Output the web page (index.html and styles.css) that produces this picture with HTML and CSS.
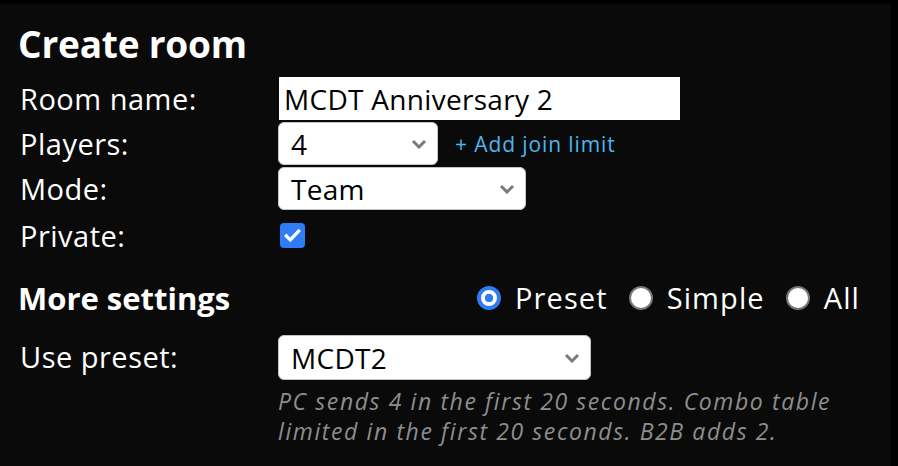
FILE: index.html
```html
<!DOCTYPE html>
<html lang="en">
<head>
  <meta charset="UTF-8">
  <title>Create room</title>
  <link rel="stylesheet" href="styles.css">
</head>
<body>
  <div class="panel">
    <h1 class="panel-title">Create room</h1>
    <div class="form-grid">
      <label class="form-label">Room name:</label>
      <div class="form-field">
        <input class="text-input" type="text" value="MCDT Anniversary 2">
      </div>

      <label class="form-label">Players:</label>
      <div class="form-field">
        <div class="select-box players">
          <span class="select-value">4</span>
          <svg class="select-arrow" viewBox="0 0 16 10"><path d="M2 2l6 6 6-6" fill="none" stroke="#7a7a7a" stroke-width="3"/></svg>
        </div>
        <a class="join-link" href="#">+ Add join limit</a>
      </div>

      <label class="form-label">Mode:</label>
      <div class="form-field">
        <div class="select-box mode">
          <span class="select-value">Team</span>
          <svg class="select-arrow" viewBox="0 0 16 10"><path d="M2 2l6 6 6-6" fill="none" stroke="#7a7a7a" stroke-width="3"/></svg>
        </div>
      </div>

      <label class="form-label private">Private:</label>
      <div class="form-field private">
        <span class="checkbox">
          <svg viewBox="0 0 24 24"><path d="M5 12.5l4.5 4.5L19 7" fill="none" stroke="#fff" stroke-width="3.8" stroke-linecap="square"/></svg>
        </span>
      </div>
    </div>

    <div class="settings-head">
      <h2 class="settings-title">More settings</h2>
      <div class="radio-group">
        <span class="radio checked"></span><span class="radio-label">Preset</span>
        <span class="radio"></span><span class="radio-label">Simple</span>
        <span class="radio"></span><span class="radio-label">All</span>
      </div>
    </div>

    <div class="form-grid preset-grid">
      <label class="form-label">Use preset:</label>
      <div class="form-field column">
        <div class="select-box preset">
          <span class="select-value">MCDT2</span>
          <svg class="select-arrow" viewBox="0 0 16 10"><path d="M2 2l6 6 6-6" fill="none" stroke="#7a7a7a" stroke-width="3"/></svg>
        </div>
        <p class="preset-desc">PC sends 4 in the first 20 seconds. Combo table limited in the first 20 seconds. B2B adds 2.</p>
      </div>
    </div>
  </div>
</body>
</html>
```

FILE: styles.css
```css
:root {
  --panel: #0a0a0a;
  --text: #fff;
  --muted: #8e8e8e;
  --link: #4db5ef;
  --blue: #2f7cf6;
  --field-border: #c4c4c4;
}
html, body {
  margin: 0;
  padding: 0;
  background: #000;
  font-family: 'Open Sans', 'Noto Sans', sans-serif;
  color: var(--text);
}
body {
  height: 466px;
  overflow: hidden;
  padding-top: 4px;
  box-sizing: border-box;
}
.panel {
  width: 891px;
  height: 462px;
  background: var(--panel);
  padding: 0 18px;
  box-sizing: border-box;
}
.panel-title {
  margin: 0;
  padding-top: 16px;
  font-size: 37px;
  font-weight: 700;
  line-height: 48px;
  letter-spacing: -0.2px;
}
.form-grid {
  display: grid;
  grid-template-columns: 260px auto;
  row-gap: 2px;
  margin-top: 9px;
}
.form-label {
  padding-left: 2px;
  font-size: 29px;
  line-height: 43px;
  letter-spacing: 0.5px;
}
.form-field {
  display: flex;
  align-items: center;
  gap: 17px;
}
.form-field.column {
  flex-direction: column;
  align-items: flex-start;
  gap: 0;
}
.text-input {
  width: 401px;
  height: 43px;
  margin-left: 1px;
  border: none;
  outline: none;
  padding: 0 5px;
  box-sizing: border-box;
  font-family: inherit;
  font-size: 28px;
  letter-spacing: 0.3px;
  color: #000;
  background: #fff;
}
.select-box {
  position: relative;
  height: 43px;
  box-sizing: border-box;
  background: #fff;
  border: 1px solid var(--field-border);
  border-radius: 6px;
  padding: 0 12px;
  display: flex;
  align-items: center;
  color: #000;
  font-size: 28px;
  letter-spacing: 0.3px;
}
.select-box.players { width: 160px; }
.select-box.mode { width: 248px; }
.select-box.preset { width: 313px; height: 45px; }
.select-arrow {
  position: absolute;
  right: 10px;
  top: 50%;
  width: 16px;
  height: 10px;
  margin-top: -5px;
}
.join-link {
  color: var(--link);
  text-decoration: none;
  font-size: 21px;
  letter-spacing: 0.9px;
}
.form-label.private, .form-field.private {
  margin-top: 2px;
}
.checkbox {
  width: 25px;
  height: 25px;
  margin-left: 2px;
  border-radius: 4px;
  background: var(--blue);
  display: flex;
  align-items: center;
  justify-content: center;
}
.checkbox svg {
  width: 21px;
  height: 21px;
}
.settings-head {
  display: flex;
  align-items: center;
  justify-content: space-between;
  margin-top: 21px;
  padding-right: 13px;
}
.settings-title {
  margin: 0;
  font-size: 31px;
  font-weight: 700;
  line-height: 40px;
}
.radio-group {
  display: flex;
  align-items: center;
}
.radio {
  width: 24px;
  height: 24px;
  box-sizing: border-box;
  border-radius: 50%;
  background: #fff;
  border: 2px solid #767676;
  margin: 0 14px 0 21px;
}
.radio.checked {
  border: 4px solid var(--blue);
  background: radial-gradient(circle, var(--blue) 0 4px, #fff 4.5px);
}
.radio-label {
  font-size: 29px;
  line-height: 40px;
  letter-spacing: 1.1px;
}
.preset-grid {
  margin-top: 17px;
}
.preset-desc {
  margin: 6px 0 0;
  width: 562px;
  font-size: 23px;
  line-height: 30px;
  letter-spacing: 1.6px;
  font-style: italic;
  color: var(--muted);
}
```
